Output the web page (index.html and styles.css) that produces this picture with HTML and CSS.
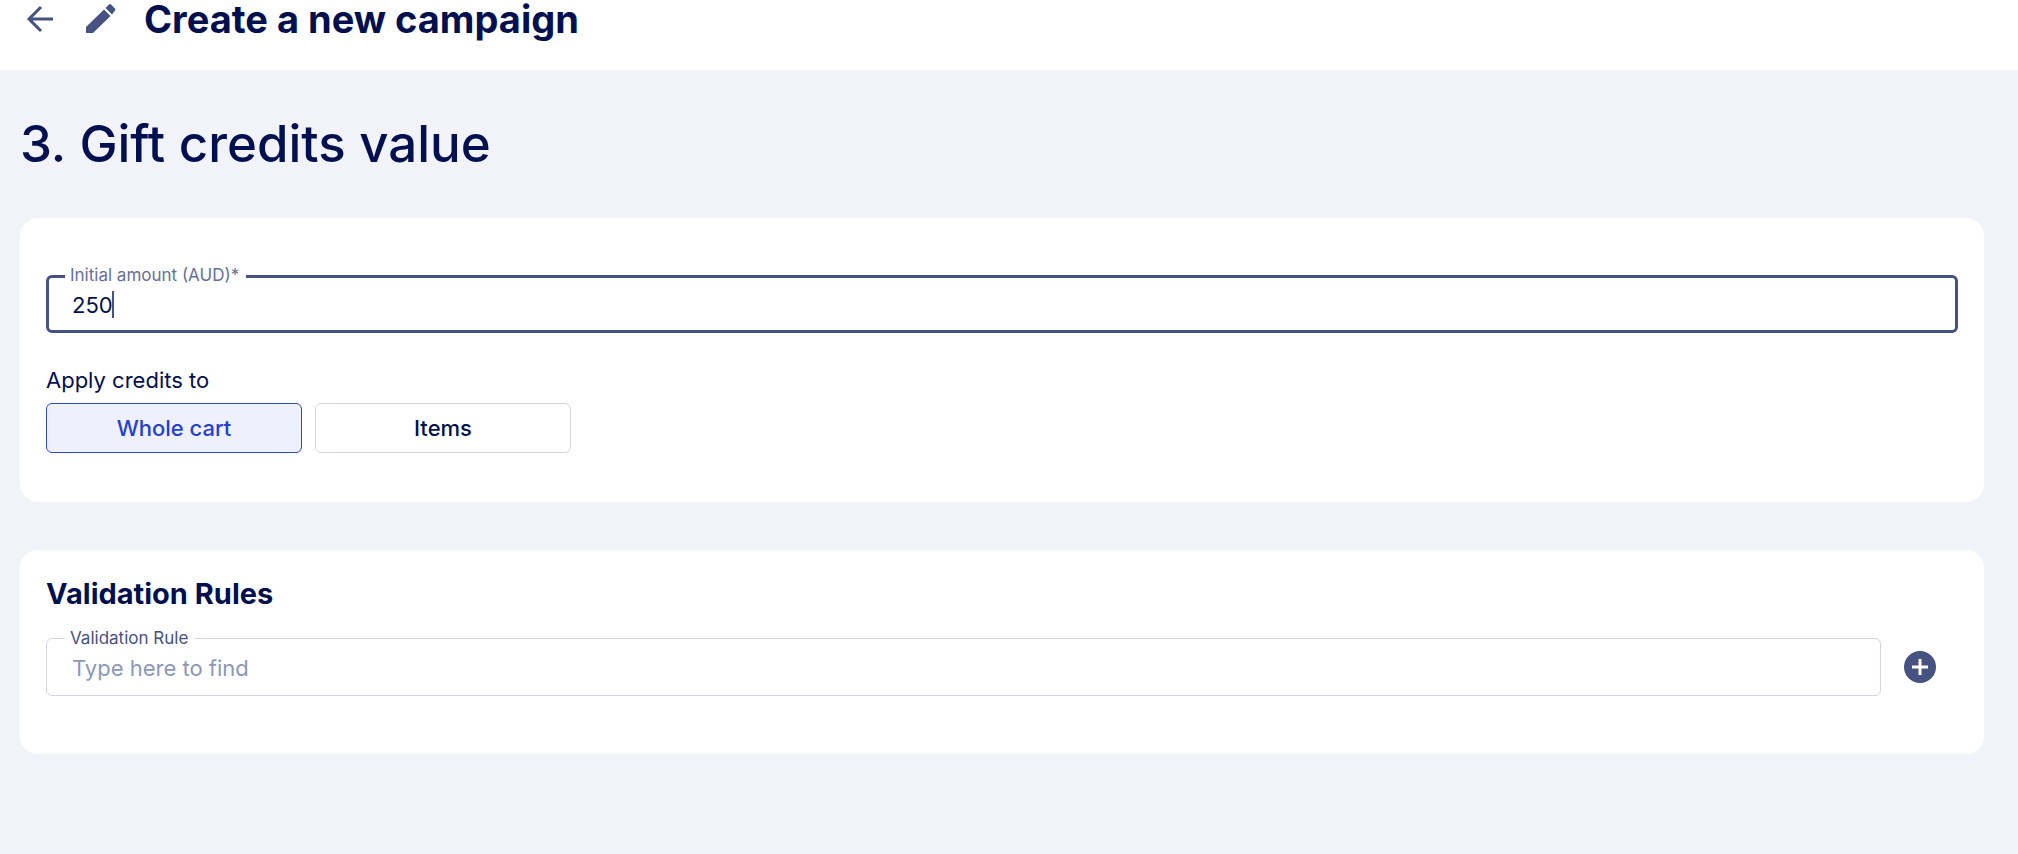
FILE: index.html
```html
<!DOCTYPE html>
<html lang="en">
  <head>
    <meta charset="UTF-8" />
    <meta name="viewport" content="width=device-width, initial-scale=1.0" />
    <title>Create a new campaign</title>
    <link rel="stylesheet" href="styles.css">
  </head>
  <body>
    <header class="header">
      <button class="icon-button" type="button" aria-label="Back">
        <svg width="32" height="38" viewBox="0 0 32 38" fill="none" stroke="currentColor" stroke-width="3">
          <path d="M29 19H5M17 7L5 19L17 31" />
        </svg>
      </button>
      <svg class="edit-icon" width="30" height="38" viewBox="0 0 30 38" fill="currentColor" aria-hidden="true">
        <path d="M0 33V27L18 9.500L24.500 16L7 33ZM19.500 8L23 4.500Q24 3.500 25 4.500L29 8.500Q30 9.500 29 10.500L26 14.500Z" />
      </svg>
      <h1 class="title">Create a new campaign</h1>
    </header>
    <main class="content">
      <h2 class="step-title">3. Gift credits value</h2>

      <!-- Credits amount -->
      <section class="card amount-card">
        <div class="field focused">
          <label for="amount">Initial amount (AUD)*</label>
          <input type="text" id="amount" value="250" inputmode="decimal" />
          <span class="caret"></span>
        </div>
        <p class="group-label" id="apply-label">Apply credits to</p>
        <div class="toggle-group" role="group" aria-labelledby="apply-label">
          <button class="toggle selected" type="button" aria-pressed="true">Whole cart</button>
          <button class="toggle" type="button" aria-pressed="false">Items</button>
        </div>
      </section>

      <!-- Validation rules -->
      <section class="card rules-card">
        <h3 class="card-title">Validation Rules</h3>
        <div class="rule-row">
          <div class="field">
            <label for="rule">Validation Rule</label>
            <input type="text" id="rule" placeholder="Type here to find" />
          </div>
          <button class="icon-button" type="button" aria-label="Add rule">
            <svg width="32" height="32" viewBox="0 0 32 32">
              <circle cx="16" cy="16" r="16" fill="currentColor" />
              <path d="M16 8V24M8 16H24" stroke="#fff" stroke-width="3" />
            </svg>
          </button>
        </div>
      </section>
    </main>
  </body>
</html>
```
FILE: styles.css
```css
* {
  box-sizing: border-box;
}
body {
  margin: 0;
  font-family: Inter, "Liberation Sans", sans-serif;
  font-size: 22px;
  color: #02104f;
  background: #f2f3f8;
}
h1,
h2,
h3,
p {
  margin: 0;
}
button,
input {
  font: inherit;
  color: inherit;
}
svg {
  display: block;
}
.header {
  display: flex;
  align-items: center;
  padding: 0 24px 32px;
  background: #fff;
}
.icon-button {
  padding: 0;
  border: none;
  background: none;
  color: #465282;
  cursor: pointer;
}
.edit-icon {
  margin: 0 28px 0 30px;
  color: #465282;
}
.title {
  font-size: 38px;
  line-height: 38px;
  font-weight: 700;
}
.content {
  padding: 42px 34px 42px 20px;
}
.step-title {
  font-size: 51px;
  line-height: 64px;
  font-weight: 500;
}
.card {
  background: #fff;
  border-radius: 18px;
}
.amount-card {
  margin-top: 42px;
  padding: 57px 26px 49px;
}
.rules-card {
  margin-top: 48px;
  padding: 26px 26px 58px;
}
.field {
  position: relative;
  flex: 1;
  height: 58px;
  border: 1px solid #d3d3e3;
  border-radius: 6px;
}
.field label {
  position: absolute;
  top: -11px;
  left: 18px;
  padding: 0 7px 0 5px;
  background: #fff;
  color: #465282;
  font-size: 17px;
  line-height: 20px;
}
.field input {
  width: 100%;
  height: 100%;
  padding: 2px 25px 0;
  border: none;
  outline: none;
  background: none;
}
.field input::placeholder {
  color: #8c97ba;
  opacity: 1;
}
.field.focused {
  border: 3px solid #465282;
}
.field.focused label {
  top: -13px;
  left: 16px;
  color: #656f9b;
}
.field.focused input {
  padding: 2px 23px 0;
}
.caret {
  position: absolute;
  top: 13px;
  left: 63px;
  width: 2px;
  height: 27px;
  background: #465282;
}
.group-label {
  margin: 33px 0 9px;
  line-height: 28px;
}
.toggle-group {
  display: flex;
  gap: 13px;
}
.toggle {
  width: 256px;
  height: 50px;
  border: 1px solid #d3d3e3;
  border-radius: 6px;
  background: #fff;
  font-weight: 500;
  cursor: pointer;
}
.toggle.selected {
  border-color: #304bc0;
  background: #eef0fc;
  color: #2340d0;
}
.card-title {
  font-size: 29px;
  line-height: 36px;
  font-weight: 700;
}
.rule-row {
  display: flex;
  align-items: center;
  gap: 23px;
  margin-top: 26px;
  padding-right: 22px;
}
```
